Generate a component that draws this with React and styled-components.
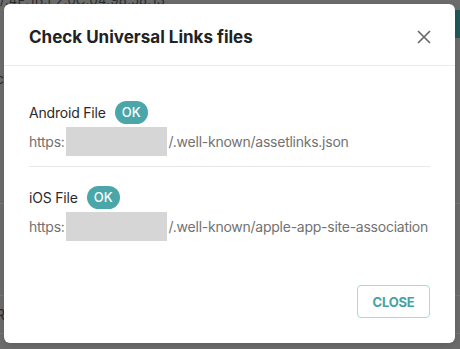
import styled, { createGlobalStyle } from 'styled-components';

const GlobalStyle = createGlobalStyle`
    html, body {
        margin: 0;
        padding: 0;
        font-family: Inter, 'Noto Sans', sans-serif;
    }
`;

const Screen = styled.div`
    position: relative;
    width: 460px;
    height: 349px;
    overflow: hidden;
    background: #6d6d6d;
`;

/* dimmed page behind the dialog */
const BgPage = styled.div`
    display: flex;
    flex-direction: column;
    height: 100%;
`;

const BgTop = styled.div`
    display: flex;
    justify-content: space-between;
    align-items: flex-start;
    height: 60px;
`;

const BgHash = styled.span`
    margin-top: -8px;
    font-size: 13px;
    color: #2b2b2b;
    letter-spacing: 0.2px;
`;

const BgButton = styled.span`
    margin-top: 10px;
    width: 6px;
    height: 28px;
    background: #1f5a5a;
`;

const BgRow = styled.div`
    height: ${(p) => p.$h}px;
    border-bottom: 1px solid ${(p) => (p.$line ? '#7a7a7a' : 'transparent')};
    font-size: 14px;
    color: #2b2b2b;
    display: flex;
    align-items: center;
    margin-left: -4px;
`;

const Modal = styled.div`
    position: absolute;
    top: 4px;
    left: 4px;
    width: 451px;
    height: 339px;
    background: #fff;
    border-radius: 6px;
    display: flex;
    flex-direction: column;
    box-shadow: 0 2px 8px rgba(0, 0, 0, 0.15);
`;

const Header = styled.header`
    height: 62px;
    padding: 4px 25px 0 25px;
    box-sizing: border-box;
    display: flex;
    align-items: center;
    justify-content: space-between;
    border-bottom: 1px solid #ececec;
`;

const Title = styled.h2`
    margin: 0;
    font-size: 17px;
    font-weight: 700;
    color: #222;
`;

const CloseIcon = styled.button`
    border: none;
    background: none;
    padding: 0;
    margin-right: -1px;
    width: 14px;
    height: 14px;
    cursor: pointer;
    display: flex;
`;

const Body = styled.div`
    padding: 16px 25px 0 25px;
`;

const Section = styled.section`
    padding: 18px 0 10px;
    border-bottom: 1px solid ${(p) => (p.$last ? 'transparent' : '#e8e8e8')};
`;

const LabelRow = styled.div`
    display: flex;
    align-items: center;
    gap: 9px;
    height: 24px;
`;

const Label = styled.span`
    font-size: 14px;
    letter-spacing: -0.2px;
    color: #2a2a2a;
`;

const Badge = styled.span`
    display: inline-flex;
    align-items: center;
    justify-content: center;
    width: 33px;
    height: 23px;
    border-radius: 12px;
    background: #4aa6a8;
    color: #fff;
    font-size: 13px;
    font-weight: 500;
`;

const UrlRow = styled.div`
    display: flex;
    align-items: center;
    height: 29px;
    margin-top: 3px;
    font-size: 14px;
    letter-spacing: -0.25px;
    color: #727272;
    white-space: nowrap;
`;

const Redacted = styled.span`
    display: inline-block;
    width: 101px;
    height: 29px;
    background: #d6d6d6;
    margin: 0 2px 0 1px;
`;

const Footer = styled.footer`
    margin-top: auto;
    padding: 0 25px 25px;
    display: flex;
    justify-content: flex-end;
`;

const Button = styled.button`
    width: 73px;
    height: 33px;
    border: 1px solid #a8dadb;
    border-radius: 4px;
    background: #fff;
    color: #45a3a6;
    font-family: inherit;
    font-size: 13px;
    font-weight: 700;
    letter-spacing: -0.2px;
    cursor: pointer;
`;

const files = [
    { label: 'Android File', path: '/.well-known/assetlinks.json' },
    { label: 'iOS File', path: '/.well-known/apple-app-site-association' },
];

const App = () => {
    return (
        <>
            <GlobalStyle />
            <Screen>
                <BgPage>
                    <BgTop>
                        <BgHash>/:4F:1B:E2:0C:04:98:58:13</BgHash>
                        <BgButton />
                    </BgTop>
                    <BgRow $h={37}>c</BgRow>
                    <BgRow $h={105} $line />
                    <BgRow $h={91} $line />
                    <BgRow $h={37} $line>R</BgRow>
                </BgPage>
                <Modal>
                    <Header>
                        <Title>Check Universal Links files</Title>
                        <CloseIcon aria-label="close">
                            <svg width="14" height="14" viewBox="0 0 14 14">
                                <path d="M1 1 L13 13 M13 1 L1 13" stroke="#666" strokeWidth="1.6" fill="none" />
                            </svg>
                        </CloseIcon>
                    </Header>
                    <Body>
                        {files.map((f, i) => (
                            <Section key={f.label} $last={i === files.length - 1}>
                                <LabelRow>
                                    <Label>{f.label}</Label>
                                    <Badge>OK</Badge>
                                </LabelRow>
                                <UrlRow>
                                    https:
                                    <Redacted />
                                    {f.path}
                                </UrlRow>
                            </Section>
                        ))}
                    </Body>
                    <Footer>
                        <Button>CLOSE</Button>
                    </Footer>
                </Modal>
            </Screen>
        </>
    );
};

export default App;
